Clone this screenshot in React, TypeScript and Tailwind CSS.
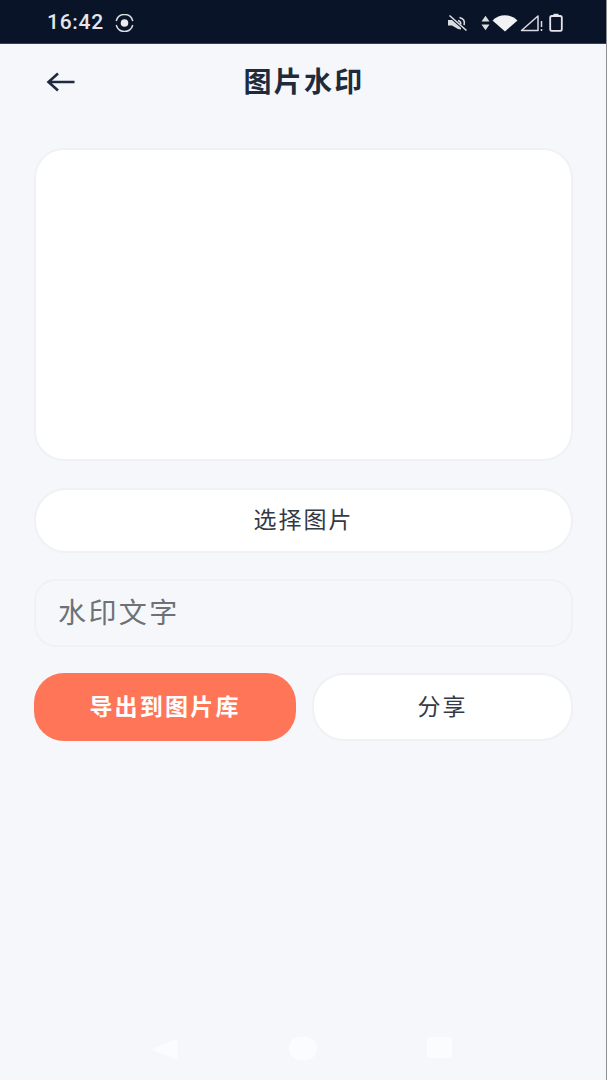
export default function App() {
  const cjk = "font-['Roboto','Noto_Sans_CJK_SC',sans-serif]";
  return (
    <div className={`w-[607px] h-[1080px] bg-[#f5f7fb] flex flex-col overflow-hidden border-r border-[#8d8f94] ${cjk}`}>
      <div className="h-[44px] shrink-0 bg-[#0a1428] flex items-center pl-[47px] pr-[43px] border-b border-[#3a4252]">
        <span className="text-[21px] font-medium tracking-[0.7px] text-[#e4e6ea] leading-none font-['Roboto',sans-serif] pt-[1px]">16:42</span>
        <svg className="ml-[9px] mt-[2px]" width="23" height="18" viewBox="0 0 23 18" fill="none">
          <circle cx="11.5" cy="9" r="3.8" fill="#e9ebee" />
          <path d="M3.4 6.4A8.5 8.5 0 0 1 19.6 6.4M19.6 11.6A8.5 8.5 0 0 1 3.4 11.6" stroke="#d9dce0" strokeWidth="1.5" strokeLinecap="round" />
        </svg>
        <div className="ml-auto flex items-center mt-[2px]">
          <svg width="22" height="18" viewBox="0 0 22 18" fill="none">
            <path d="M1 6h3.5l2.5-2 7 8v3.5l-3-.5-6-3.5H1z" fill="#d9dce0" />
            <path d="M2.5 1.5l17 15" stroke="#0a1428" strokeWidth="3.6" />
            <path d="M2.5 1.5l17 15" stroke="#d9dce0" strokeWidth="1.6" />
            <path d="M12.5 3.5c3.8 1 5.6 3.8 4.6 7.6M11 6.5c2 .6 3 2 2.7 3.8" stroke="#d9dce0" strokeWidth="1.6" />
          </svg>
          <svg className="ml-[12px]" width="9" height="16" viewBox="0 0 9 16">
            <path d="M4.5 0.8L8.5 6.6H.5zM4.5 15.2L.5 9.4h8z" fill="#d9dce0" />
          </svg>
          <svg className="ml-[2px]" width="26" height="18" viewBox="0 0 26 18">
            <path d="M.5 6.4C7.2-.6 18.8-.6 25.5 6.4L13 17.5z" fill="#f1f2f4" />
          </svg>
          <svg className="ml-[2px]" width="23" height="18" viewBox="0 0 23 18" fill="none">
            <path d="M18 2L1.5 16.5H18z" stroke="#d9dce0" strokeWidth="1.5" strokeLinejoin="round" />
            <path d="M21.5 7v6M21.5 15v2" stroke="#d9dce0" strokeWidth="1.5" />
          </svg>
          <svg className="ml-[6px]" width="14" height="19" viewBox="0 0 14 19" fill="none">
            <rect x="1.2" y="3" width="11.6" height="14.8" rx="1.6" stroke="#e4e6ea" strokeWidth="1.8" />
            <rect x="4.5" y="0.8" width="5" height="2.2" fill="#e4e6ea" />
          </svg>
        </div>
      </div>

      <div className="h-[76px] shrink-0 flex items-center justify-center relative">
        <svg className="absolute left-[46px] top-[26px]" width="30" height="24" viewBox="0 0 30 24" fill="none">
          <path d="M28.5 12H2.5M12 3.5L2.5 12L12 20.5" stroke="#1f2a40" strokeWidth="2.6" />
        </svg>
        <span className="text-[28px] font-bold text-[#1f2a3c] leading-none tracking-[2.2px] pl-[2px] pt-[1px]">图片水印</span>
      </div>

      <div className="pl-[34px] pr-[34px] flex flex-col">
        <div className="mt-[28px] h-[313px] w-[539px] bg-white rounded-[30px] border-2 border-[#eff1f5]" />
        <button className="mt-[27px] h-[65px] w-[539px] bg-white rounded-[32px] border-2 border-[#eff1f5] text-[23px] tracking-[2px] text-[#333945] flex items-center justify-center pt-[1px]">
          选择图片
        </button>
        <div className="mt-[26px] h-[68px] w-[539px] rounded-[22px] border-2 border-[#eff1f5] bg-[#f5f7fb] pl-[22px] flex items-center text-[28px] text-[#6e7175] tracking-[2.4px] pt-[2px]">
          水印文字
        </div>
        <div className="mt-[26px] w-[539px] flex gap-[16px]">
          <button className="w-[262px] h-[68px] rounded-[30px] bg-[#ff7558] text-white font-bold text-[23px] tracking-[2.2px] flex items-center justify-center pt-[2px]">
            导出到图片库
          </button>
          <button className="flex-1 h-[68px] rounded-[32px] bg-white border-2 border-[#eff1f5] text-[23px] tracking-[2px] text-[#333945] flex items-center justify-center pt-[2px]">
            分享
          </button>
        </div>
      </div>

      <div className="mt-auto h-[60px] shrink-0 flex items-start pt-[17px] pl-[151px]">
        <svg width="27" height="24" viewBox="0 0 27 24">
          <path d="M26.5 1V23L.5 12.5z" fill="#fbfcfe" />
        </svg>
        <div className="ml-[111px] w-[28px] h-[23px] rounded-full bg-[#fbfcfe]" />
        <div className="ml-[110px] w-[25px] h-[21px] rounded-[3px] bg-[#fbfcfe]" />
      </div>
    </div>
  );
}
